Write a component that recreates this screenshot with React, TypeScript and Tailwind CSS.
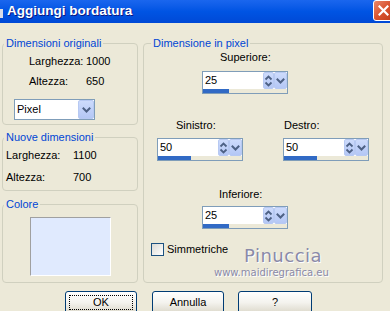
import type { ReactNode } from 'react';

function Chevron({ className = '' }: { className?: string }) {
  return (
    <svg className={className} width="9" height="6" viewBox="0 0 9 6" fill="none" stroke="#4d6185" strokeWidth="2" strokeLinecap="square">
      <path d="M1.5 1.5l3 3 3-3" />
    </svg>
  );
}

function DropBtn({ className = '' }: { className?: string }) {
  return (
    <div className={`flex items-center justify-center rounded-[2px] border border-[#b7c9f2] bg-linear-to-b from-[#cddbfc] to-[#b4c7f5] ${className}`}>
      <Chevron />
    </div>
  );
}

function Spin({ value, fill }: { value: string; fill: string }) {
  return (
    <div className="flex h-[23px] w-[86px] flex-col border border-[#7f9db9] bg-white">
      <div className="flex h-[17px]">
        <div className="flex-1 pl-[2px] leading-[16px]">{value}</div>
        <div className="flex w-[11px] flex-col items-center justify-center rounded-[2px] border border-[#b7c9f2] bg-linear-to-b from-[#cddbfc] to-[#b4c7f5]">
          <svg width="9" height="14" viewBox="0 0 9 14" fill="none" stroke="#4d6185" strokeWidth="1.8">
            <path d="M1.5 5.5l3-3 3 3" />
            <path d="M1.5 8.5l3 3 3-3" />
          </svg>
        </div>
        <DropBtn className="w-[13px]" />
      </div>
      <div className="h-[4px] bg-[#ece9d8]">
        <div className={`h-full bg-[#316ac5] ${fill}`} />
      </div>
    </div>
  );
}

function Group({ title, legendClass = 'ml-[1px]', className = '', children }: { title: string; legendClass?: string; className?: string; children: ReactNode }) {
  return (
    <fieldset className={`rounded-[4px] border border-[#d0d0bf] ${className}`}>
      <legend className={`px-[2px] leading-[13px] text-[#0046d5] ${legendClass}`}>{title}</legend>
      {children}
    </fieldset>
  );
}

function XpButton({ label, focus = false, className = '' }: { label: string; focus?: boolean; className?: string }) {
  return (
    <button type="button" className={`h-[23px] shrink-0 rounded-[3px] border border-[#003c74] bg-linear-to-b from-white via-[#f4f3ee] to-[#dcd8ca] p-[3px] ${className}`}>
      <div className={`flex h-full items-center justify-center leading-none ${focus ? 'border border-dotted border-black' : ''}`}>{label}</div>
    </button>
  );
}

export default function App() {
  return (
    <div className="h-[311px] w-[390px] overflow-hidden bg-[#ece9d8] font-['Liberation_Sans',Arial,sans-serif] text-[11px] text-black">
      {/* title bar */}
      <div className="flex h-[23px] items-start bg-linear-to-b from-[#1a66ee] via-[#0054e3] to-[#0049d6]">
        <div className="mt-[9px] h-[9px] w-[3px] bg-[#d8dce8]" />
        <div className="ml-[4px] mt-[3px] text-[13.5px] font-bold leading-[16px] text-white [text-shadow:1px_1px_0_#0a1883]">Aggiungi bordatura</div>
        <div className="-mr-[4px] ml-auto flex h-[21px] w-[21px] items-center justify-center rounded-[3px] border border-white bg-linear-to-br from-[#e8866a] via-[#d9532f] to-[#c23c17]">
          <svg width="11" height="11" viewBox="0 0 11 11" stroke="white" strokeWidth="2.2" strokeLinecap="square">
            <path d="M1.5 1.5l8 8M9.5 1.5l-8 8" />
          </svg>
        </div>
      </div>

      <div className="flex items-stretch pl-[2px] pt-[14px]">
        {/* left column */}
        <div className="flex w-[136px] flex-col">
          <Group title="Dimensioni originali" className="pb-[4px]">
            <div className="mt-[1px] flex h-[20px] items-center pl-[26px]">
              <span className="w-[57px]">Larghezza:</span>
              <span>1000</span>
            </div>
            <div className="flex h-[20px] items-center pl-[26px]">
              <span className="w-[57px]">Altezza:</span>
              <span>650</span>
            </div>
            <div className="ml-[11px] mt-[8px] flex h-[21px] w-[81px] border border-[#7f9db9] bg-white">
              <div className="flex-1 pl-[2px] leading-[19px]">Pixel</div>
              <DropBtn className="w-[16px]" />
            </div>
          </Group>

          <Group title="Nuove dimensioni" className="mt-[6px] pb-[3px]">
            <div className="mt-[1px] flex h-[20px] items-center pl-[3px]">
              <span className="w-[67px]">Larghezza:</span>
              <span>1100</span>
            </div>
            <div className="mt-[2px] flex h-[20px] items-center pl-[3px]">
              <span className="w-[67px]">Altezza:</span>
              <span>700</span>
            </div>
          </Group>

          <Group title="Colore" className="mt-[7px] flex-1 pb-[6px]">
            <div className="ml-[27px] mt-[6px] h-[59px] w-[81px] border border-b-white border-l-[#a0a0a0] border-r-white border-t-[#a0a0a0] bg-[#e0eafe]" />
          </Group>
        </div>

        {/* right group */}
        <Group title="Dimensione in pixel" legendClass="ml-[7px]" className="relative ml-[5px] w-[240px]">
          <div className="ml-[58px] flex w-[86px] flex-col">
            <div className="ml-[18px] h-[14px] leading-[14px]">Superiore:</div>
            <div className="mt-[7px]">
              <Spin value="25" fill="w-[26px]" />
            </div>
          </div>

          <div className="mt-[24px] flex pl-[13px]">
            <div className="flex w-[86px] flex-col">
              <div className="ml-[19px] h-[14px] leading-[14px]">Sinistro:</div>
              <div className="mt-[6px]">
                <Spin value="50" fill="w-[33px]" />
              </div>
            </div>
            <div className="ml-[40px] flex w-[86px] flex-col">
              <div className="ml-[1px] h-[14px] leading-[14px]">Destro:</div>
              <div className="mt-[6px]">
                <Spin value="50" fill="w-[33px]" />
              </div>
            </div>
          </div>

          <div className="ml-[58px] mt-[26px] flex w-[86px] flex-col">
            <div className="ml-[17px] h-[14px] leading-[14px]">Inferiore:</div>
            <div className="mt-[5px]">
              <Spin value="25" fill="w-[26px]" />
            </div>
          </div>

          <div className="ml-[7px] mt-[12px] flex items-center">
            <div className="h-[13px] w-[13px] border border-[#1c5180] bg-linear-to-br from-[#dcdbd5] to-white" />
            <span className="ml-[3px]">Simmetriche</span>
          </div>

          {/* watermark */}
          <div className="absolute left-[100px] top-[196px] font-['DejaVu_Sans',sans-serif] text-[18px] leading-[20px] tracking-[0.5px] text-[#8a8aa8] [text-shadow:1px_1px_0_#ffffff]">Pinuccia</div>
          <div className="absolute left-[70px] top-[217px] font-['DejaVu_Sans',sans-serif] text-[10px] leading-[12px] text-[#8a8aa8] [text-shadow:1px_1px_0_#ffffff]">www.maidiregrafica.eu</div>
        </Group>
      </div>

      {/* buttons */}
      <div className="mt-[8px] flex pl-[65px]">
        <XpButton label="OK" focus className="w-[72px]" />
        <XpButton label="Annulla" className="ml-[15px] w-[72px]" />
        <XpButton label="?" className="ml-[14px] w-[74px]" />
      </div>
    </div>
  );
}
